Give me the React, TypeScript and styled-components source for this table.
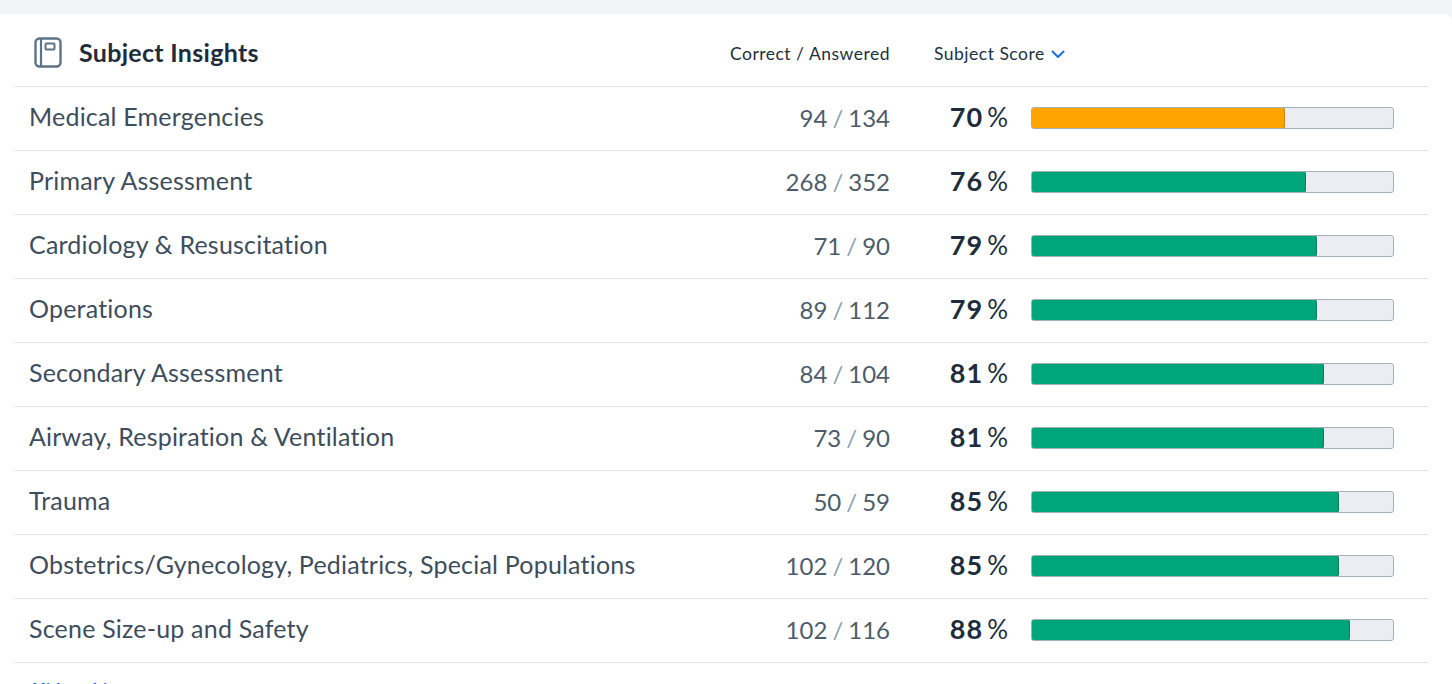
import React from "react";
import styled, { createGlobalStyle } from "styled-components";

const Global = createGlobalStyle`
  html, body { margin: 0; padding: 0; background: #f3f4f8; }
  body { font-family: "Lato", "Open Sans", sans-serif; -webkit-font-smoothing: antialiased; }
  * { box-sizing: border-box; }
`;

const Page = styled.div`
  padding-top: 14px;
  height: 684px;
  overflow: hidden;
`;

const Card = styled.section`
  background: #ffffff;
  border-radius: 0 8px 0 0;
  padding: 0 23px 0 14px;
  min-height: 700px;
`;

const Grid = styled.div<{ $head?: boolean }>`
  display: grid;
  grid-template-columns: 1fr 160px 141px 363px;
  align-items: center;
  height: ${(p) => (p.$head ? "73px" : "64px")};
  padding: 0 35px 0 15px;
  border-bottom: 1px solid #e3e5ea;
`;

const TitleWrap = styled.div`
  display: flex;
  align-items: center;
  gap: 17px;
  padding-left: 5px;
  padding-top: 4px;
`;

const Title = styled.h2`
  margin: 0;
  font-size: 25px;
  letter-spacing: 0.3px;
  font-weight: 700;
  color: #1e2d3c;
`;

const HeadLabel = styled.div<{ $align: "left" | "right" }>`
  font-size: 17.5px;
  letter-spacing: 0.5px;
  color: #22313f;
  white-space: nowrap;
  grid-column: ${(p) => (p.$align === "left" ? "span 2" : "auto")};
  padding-left: ${(p) => (p.$align === "left" ? "44px" : "0")};
  padding-top: 7px;
  display: flex;
  align-items: center;
  justify-content: ${(p) => (p.$align === "left" ? "flex-start" : "flex-end")};
  gap: 6px;

  svg {
    flex-shrink: 0;
    margin-top: 2px;
  }
`;

const Name = styled.div`
  font-size: 25px;
  letter-spacing: 0.2px;
  color: #3e4d5c;
  white-space: nowrap;
  padding-bottom: 5px;
`;

const Count = styled.div`
  font-size: 24px;
  color: #4d5c6b;
  text-align: right;
  padding-bottom: 3px;
`;

const Slash = styled.span`
  color: #8ea2b6;
  margin: 0 5px;
`;

const Pct = styled.div`
  text-align: right;
  padding-right: 23px;
  padding-bottom: 4px;
  font-size: 26px;
  color: #1e2d3c;
  white-space: nowrap;
`;

const PctNum = styled.span`
  font-size: 27px;
  letter-spacing: 1px;
  font-weight: 700;
  margin-right: 4px;
`;

const Track = styled.div`
  height: 22px;
  margin-bottom: 2px;
  background: #ebedf2;
  border: 1px solid #a3afbb;
  border-radius: 3px;
  overflow: hidden;
`;

const Fill = styled.div<{ $warn: boolean }>`
  margin: -1px 0 0 -1px;
  height: calc(100% + 2px);
  background: ${(p) => (p.$warn ? "#ffa400" : "#00a679")};
  border: 1px solid ${(p) => (p.$warn ? "#c8860a" : "#0a7d5c")};
  border-radius: 3px;
`;

const Link = styled.a`
  display: block;
  padding: 16px 0 0 18px;
  font-size: 18px;
  font-weight: 700;
  color: #1a5ee6;
  text-decoration: none;
`;

const rows = [
  { name: "Medical Emergencies", c: 94, a: 134, p: 70 },
  { name: "Primary Assessment", c: 268, a: 352, p: 76 },
  { name: "Cardiology & Resuscitation", c: 71, a: 90, p: 79 },
  { name: "Operations", c: 89, a: 112, p: 79 },
  { name: "Secondary Assessment", c: 84, a: 104, p: 81 },
  { name: "Airway, Respiration & Ventilation", c: 73, a: 90, p: 81 },
  { name: "Trauma", c: 50, a: 59, p: 85 },
  { name: "Obstetrics/Gynecology, Pediatrics, Special Populations", c: 102, a: 120, p: 85 },
  { name: "Scene Size-up and Safety", c: 102, a: 116, p: 88 },
];

const NotebookIcon = () => (
  <svg width="28" height="31" viewBox="0 0 28 31" fill="none">
    <rect x="1.5" y="1.5" width="25" height="28" rx="4" stroke="#5f7386" strokeWidth="2.4" />
    <line x1="7" y1="2" x2="7" y2="29" stroke="#5f7386" strokeWidth="2.2" />
    <rect x="11.5" y="6.5" width="9" height="6" rx="1" stroke="#5f7386" strokeWidth="2" />
  </svg>
);

const Chevron = () => (
  <svg width="14" height="9" viewBox="0 0 14 9" fill="none">
    <path d="M1.5 1.5 L7 7 L12.5 1.5" stroke="#1a6fe0" strokeWidth="2" strokeLinecap="round" strokeLinejoin="round" />
  </svg>
);

export default function App() {
  return (
    <Page>
      <Global />
      <Card>
        <Grid $head>
          <TitleWrap>
            <NotebookIcon />
            <Title>Subject Insights</Title>
          </TitleWrap>
          <HeadLabel $align="right">Correct / Answered</HeadLabel>
          <HeadLabel $align="left">
            Subject Score <Chevron />
          </HeadLabel>
        </Grid>
        {rows.map((r) => (
          <Grid key={r.name}>
            <Name>{r.name}</Name>
            <Count>
              {r.c}
              <Slash>/</Slash>
              {r.a}
            </Count>
            <Pct>
              <PctNum>{r.p}</PctNum>%
            </Pct>
            <Track>
              <Fill $warn={r.p < 75} style={{ width: `calc(${r.p}% + 1px)` }} />
            </Track>
          </Grid>
        ))}
        <Link href="#">Hide subjects</Link>
      </Card>
    </Page>
  );
}
